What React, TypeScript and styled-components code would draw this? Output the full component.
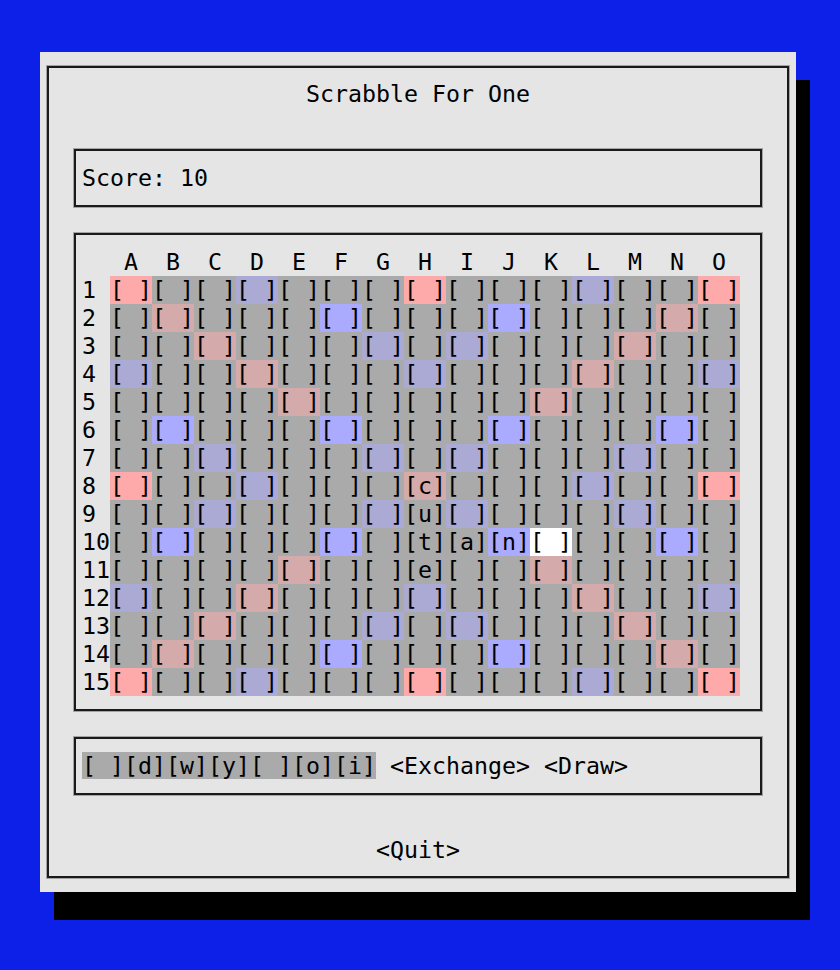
import React from "react";
import styled, { createGlobalStyle } from "styled-components";

const GlobalStyle = createGlobalStyle`
  html, body {
    margin: 0;
    padding: 0;
    background: #0c20e8;
  }
  body {
    font-family: "DejaVu Sans Mono", "Liberation Mono", monospace;
    font-size: 23.254px;
    line-height: 28px;
    color: #000;
  }
`;

const Screen = styled.div`
  width: 840px;
  height: 970px;
  padding: 52px 0 0 40px;
  box-sizing: border-box;
  background: #0c20e8;
`;

const Dialog = styled.div`
  width: 756px;
  height: 840px;
  box-sizing: border-box;
  background: #e5e5e5;
  box-shadow: 14px 28px 0 0 #000;
  padding: 14px 7px;
`;

const Frame = styled.div`
  height: 812px;
  box-sizing: border-box;
  border: 2px solid #1a1a1a;
  box-shadow: 0 0 0 1px #a4a4a4;
  display: flex;
  flex-direction: column;
  padding: 12px 25px 12px;
`;

const Title = styled.div`
  height: 28px;
  text-align: center;
  white-space: pre;
`;

const Box = styled.div<{ $gapTop: number }>`
  margin-top: ${(p) => p.$gapTop}px;
  border: 2px solid #1a1a1a;
  box-shadow: 0 0 0 1px #a4a4a4;
  padding: 13px 6px;
  display: flex;
  flex-direction: column;
`;

const Line = styled.div`
  height: 28px;
  white-space: pre;
`;

const Board = styled.div`
  display: grid;
  grid-template-columns: 28px repeat(15, 42px);
  grid-auto-rows: 28px;
`;

const Header = styled.div`
  text-align: center;
  white-space: pre;
`;

const RowLabel = styled.div`
  white-space: pre;
`;

type Kind = "tw" | "dw" | "tl" | "dl" | "n" | "cur";

const kindColor: Record<Kind, string> = {
  tw: "#ffaaaa",
  dw: "#d4aaaa",
  tl: "#aaaaff",
  dl: "#aaaad4",
  n: "#aaaaaa",
  cur: "#ffffff",
};

const Cell = styled.div<{ $kind: Kind }>`
  background: ${(p) => kindColor[p.$kind]};
  white-space: pre;
`;

const Rack = styled.span`
  background: #aaaaaa;
`;

const Quit = styled.div`
  margin-top: 41px;
  height: 28px;
  text-align: center;
  white-space: pre;
`;

const half = [
  "T..d...T...d..T",
  ".D...t...t...D.",
  "..D...d.d...D..",
  "d..D...d...D..d",
  "....D.....D....",
  ".t...t...t...t.",
  "..d...d.d...d..",
  "T..d...D...d..T",
];
const layout = [...half, ...half.slice(0, 7).reverse()];

const letters: Record<string, string> = {
  "7,7": "c",
  "8,7": "u",
  "9,7": "t",
  "9,8": "a",
  "9,9": "n",
  "10,7": "e",
};
const cursor = "9,10";

const cols = "ABCDEFGHIJKLMNO".split("");

const kindOf = (ch: string): Kind =>
  ch === "T" ? "tw" : ch === "D" ? "dw" : ch === "t" ? "tl" : ch === "d" ? "dl" : "n";

export default function App() {
  return (
    <>
      <GlobalStyle />
      <Screen>
        <Dialog>
          <Frame>
            <Title>Scrabble For One</Title>
            <Box $gapTop={41}>
              <Line>Score: 10</Line>
            </Box>
            <Box $gapTop={26}>
              <Board>
                <Header />
                {cols.map((c) => (
                  <Header key={c}>{c}</Header>
                ))}
                {layout.map((row, r) => (
                  <React.Fragment key={r}>
                    <RowLabel>{String(r + 1)}</RowLabel>
                    {row.split("").map((ch, c) => {
                      const key = `${r},${c}`;
                      const kind: Kind = key === cursor ? "cur" : kindOf(ch);
                      const letter = letters[key] ?? " ";
                      return (
                        <Cell key={key} $kind={kind}>
                          {`[${letter}]`}
                        </Cell>
                      );
                    })}
                  </React.Fragment>
                ))}
              </Board>
            </Box>
            <Box $gapTop={26}>
              <Line>
                <Rack>{"[ ][d][w][y][ ][o][i]"}</Rack>
                {" <Exchange> <Draw>"}
              </Line>
            </Box>
            <Quit>{"<Quit>"}</Quit>
          </Frame>
        </Dialog>
      </Screen>
    </>
  );
}
